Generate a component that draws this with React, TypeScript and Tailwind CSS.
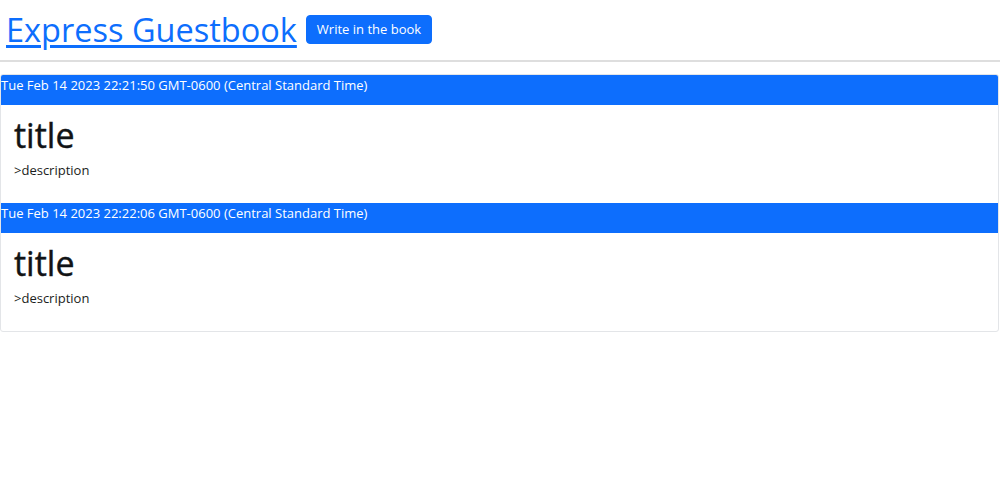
import React from "react";

const entries = [
  { date: "Tue Feb 14 2023 22:21:50 GMT-0600 (Central Standard Time)", title: "title", desc: ">description" },
  { date: "Tue Feb 14 2023 22:22:06 GMT-0600 (Central Standard Time)", title: "title", desc: ">description" },
];

export default function App() {
  return (
    <div className="w-[1000px] h-[500px] bg-white text-[#212529] font-['Open_Sans','Noto_Sans',sans-serif]">
      <div className="flex items-center gap-[9px] pl-[6px] pt-[4px] h-[54px]">
        <h1 className="m-0 text-[32.5px] leading-[1.2] font-normal">
          <a href="#" className="text-[#0d6efd] underline underline-offset-[3px]">Express Guestbook</a>
        </h1>
        <button className="h-[29px] px-[10px] rounded-[4px] bg-[#0d6efd] border border-[#0d6efd] text-white text-[13px] leading-none">
          Write in the book
        </button>
      </div>
      <hr className="mt-[6px] mb-[12px] border-0 border-t-2 border-[#dedede]" />
      <div className="mr-[1px] border border-[#e3e5e8] rounded-[3px] overflow-hidden">
        {entries.map((e, i) => (
          <div key={i}>
            <div className="h-[30px] bg-[#0d6efd] text-white text-[13px] leading-[19px] pt-[1px]">{e.date}</div>
            <div className="px-[13px] pt-[10px] h-[98px]">
              <h2 className="m-0 text-[34px] leading-[1.2] font-medium text-[#111315] [-webkit-text-stroke:0.4px_#111315]">{e.title}</h2>
              <p className="mt-[5px] text-[13px] leading-[19px] text-[#1a1d20]">{e.desc}</p>
            </div>
          </div>
        ))}
      </div>
    </div>
  );
}
